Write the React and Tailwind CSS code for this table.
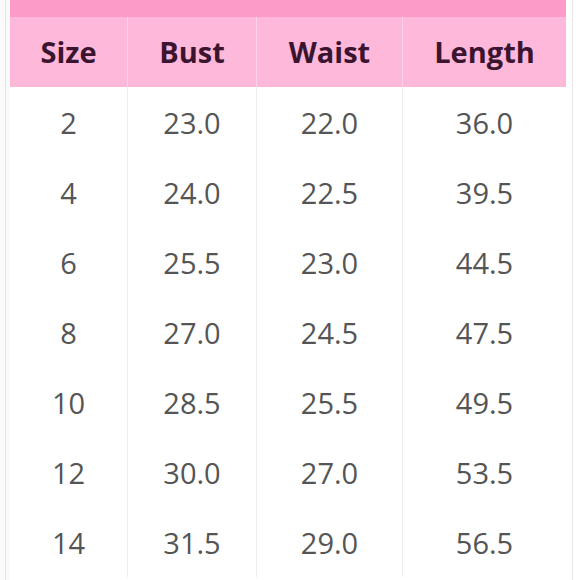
const headers = ["Size", "Bust", "Waist", "Length"];

const rows = [
  ["2", "23.0", "22.0", "36.0"],
  ["4", "24.0", "22.5", "39.5"],
  ["6", "25.5", "23.0", "44.5"],
  ["8", "27.0", "24.5", "47.5"],
  ["10", "28.5", "25.5", "49.5"],
  ["12", "30.0", "27.0", "53.5"],
  ["14", "31.5", "29.0", "56.5"],
];

const cols = "grid grid-cols-[117px_129px_146px_164px]";

export default function App() {
  return (
    <div
      className="flex h-[580px] w-[579px] overflow-hidden bg-[#fafafa]"
      style={{ fontFamily: '"Open Sans", "Noto Sans", sans-serif' }}
    >
      {/* left gutter */}
      <div className="flex w-[10px] justify-center">
        <div className="w-px bg-[#e4e4e4]" />
      </div>

      <div className="flex w-[556px] flex-col bg-white">
        <div className="h-[17px] bg-[#fd9bc8]" />

        <div className={`${cols} h-[70px] bg-[#fdb8da]`}>
          {headers.map((h, i) => (
            <div
              key={h}
              className={`flex items-center justify-center text-[29px] font-bold text-[#3b1530] ${
                i > 0 ? "border-l border-[#fdd3e7]" : ""
              }`}
            >
              {h}
            </div>
          ))}
        </div>

        {rows.map((r) => (
          <div key={r[0]} className={`${cols} h-[70px]`}>
            {r.map((v, i) => (
              <div
                key={i}
                className={`flex items-center justify-center pt-[2px] text-[29px] text-[#555555] ${
                  i > 0 ? "border-l border-[#ececec]" : ""
                }`}
              >
                {v}
              </div>
            ))}
          </div>
        ))}
      </div>

      {/* right gutter */}
      <div className="flex flex-1 justify-center bg-white">
        <div className="w-px bg-[#e6e6e6]" />
      </div>
    </div>
  );
}
